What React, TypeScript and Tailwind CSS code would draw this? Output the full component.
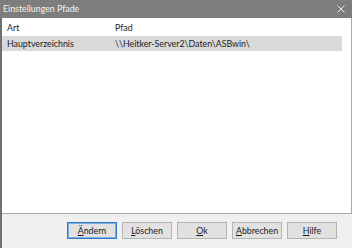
const buttons = [
  { key: "aendern", first: "Ä", rest: "ndern", isDefault: true },
  { key: "loeschen", first: "L", rest: "öschen" },
  { key: "ok", first: "O", rest: "k" },
  { key: "abbrechen", first: "A", rest: "bbrechen" },
  { key: "hilfe", first: "H", rest: "ilfe" },
];

export default function App() {
  return (
    <div className="flex h-[248px] w-[352px] flex-col bg-white font-['Lato','Open_Sans',sans-serif] text-[8.8px] text-[#1a1a1a]">
      {/* title bar */}
      <div className="flex h-[18px] shrink-0 items-center justify-between bg-[#7d7d7d] pl-[3px] pr-[7px] text-[#f4f4f4]">
        <span>Einstellungen Pfade</span>
        <svg width="8" height="8" viewBox="0 0 8 8" className="text-[#e8e8e8]">
          <path d="M0.5 0.5L7.5 7.5M7.5 0.5L0.5 7.5" stroke="currentColor" strokeWidth="1" />
        </svg>
      </div>

      <div className="flex flex-1 flex-col border-l-2 border-[#707070]">
        {/* list view */}
        <div className="flex-1 border-b border-r border-[#a8a8a8] bg-white pt-[1px]">
          <div className="flex h-[17px] items-center">
            <div className="w-[108px] pl-[5px]">Art</div>
            <div className="flex-1 pl-[5px]">Pfad</div>
          </div>
          <div className="mr-[9px] flex h-[15px] items-center bg-[#d9d9d9]">
            <div className="w-[108px] pl-[5px]">Hauptverzeichnis</div>
            <div className="flex-1 pl-[5px]">\\Heitker-Server2\Daten\ASBwin\</div>
          </div>
        </div>

        {/* button bar */}
        <div className="flex h-[34px] shrink-0 items-center gap-[5px] bg-[#f0f0f0] pb-[1px] pl-[65px]">
          {buttons.map((b) => (
            <div
              key={b.key}
              className={
                b.isDefault
                  ? "flex h-[17px] w-[50px] items-center justify-center border border-[#2f78c8] bg-[#e1e1e1] outline outline-1 -outline-offset-2 outline-[#7fb0e0]"
                  : "flex h-[17px] w-[50px] items-center justify-center border border-[#b4b4b4] bg-[#e1e1e1]"
              }
            >
              <span>
                <span className="underline underline-offset-1">{b.first}</span>
                {b.rest}
              </span>
            </div>
          ))}
        </div>
      </div>
    </div>
  );
}
